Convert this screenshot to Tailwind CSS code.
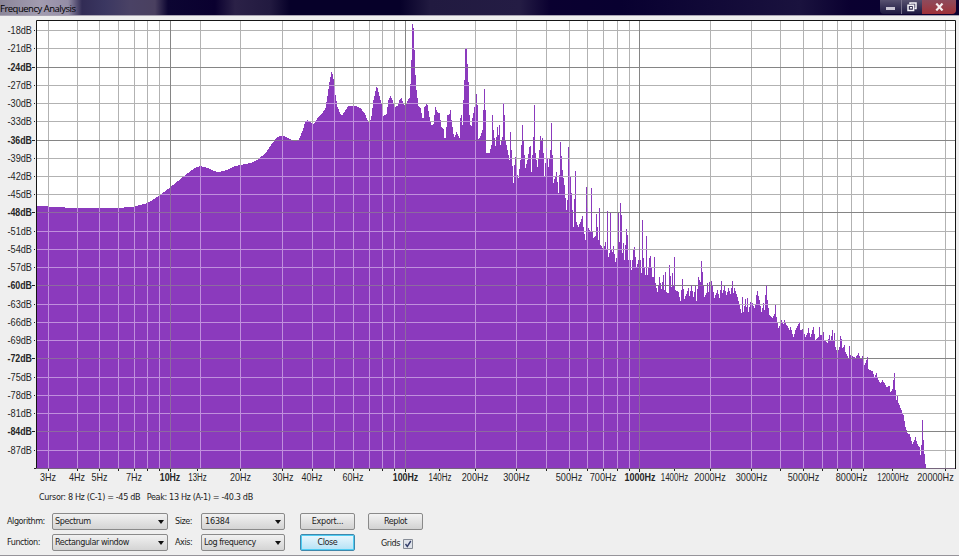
<!DOCTYPE html>
<html lang="en">
<head>
    <meta charset="UTF-8">
    <meta name="viewport" content="width=device-width, initial-scale=1.0">
    <title>Frequency Analysis</title>
    <script src="https://cdn.jsdelivr.net/npm/@tailwindcss/browser@4"></script>
</head>
<body class="w-[959px] h-[556px] overflow-hidden flex flex-col bg-[#efefef] font-['DejaVu_Sans_Condensed','Liberation_Sans',sans-serif] text-[9px] tracking-[-0.45px] text-[#222]">
    <!-- Title bar -->
    <header class="h-[15px] shrink-0 flex items-start justify-between overflow-hidden bg-[linear-gradient(90deg,#8b8699_0px,#a29cb0_40px,#948da6_68px,#322c55_82px,#3b3761_105px,#4a4265_130px,#4a4060_155px,#0c0532_168px,#0a002f_215px,#2b2147_235px,#221a40_270px,#060029_290px,#060029_400px,#211a40_430px,#241c44_520px,#0a0030_550px,#080030_620px,#1a123e_800px,#0a0030_850px,#090030_880px)]">
        <h1 class="font-['Open_Sans','Liberation_Sans',sans-serif] text-[9.5px] leading-[17px] tracking-[-0.5px] text-black whitespace-nowrap">Frequency Analysis</h1>
        <div class="flex h-[14px] mr-[3px]">
            <button class="w-[22px] h-full flex items-end justify-center bg-linear-to-b from-[#57516f] to-[#1e1840] border-r border-[#77718c] rounded-bl-sm">
                <span class="block w-[9px] h-[3px] mb-[4px] bg-[#c9c6d4]"></span>
            </button>
            <button class="w-[20px] h-full flex items-center justify-center bg-linear-to-b from-[#57516f] to-[#1e1840]">
                <svg width="10" height="10" viewBox="0 0 10 10" fill="none" stroke="#f4f4f8" stroke-width="1.5"><path d="M3 2V1h6v5.5H7.5"/><path d="M1 3.2h5.6v5.2H1z"/><path d="M3 5.8h2"/></svg>
            </button>
            <button class="w-[34px] h-full flex items-center justify-center bg-linear-to-b from-[#8d4a5c] to-[#a03038] rounded-br-sm">
                <svg width="9" height="8" viewBox="0 0 9 8" stroke="#f6eef0" stroke-width="2.2"><path d="M1.3 .6l6.2 6.8M7.5 .6L1.3 7.4"/></svg>
            </button>
        </div>
    </header>
    <div class="h-px shrink-0 bg-[#aaa5b3]"></div>

    <!-- Plot with both axes -->
    <svg id="plot" class="shrink-0 tracking-normal font-['Liberation_Sans',Arial,sans-serif]" width="959" height="472" viewBox="0 16 959 472"></svg>

    <p class="h-[19px] shrink-0 flex items-center pl-[39px]"><span class="whitespace-pre tracking-[-0.36px]">Cursor: 8 Hz (C-1) = -45 dB   Peak: 13 Hz (A-1) = -40.3 dB</span></p>

    <!-- Controls -->
    <main class="h-[48px] shrink-0 flex pt-[6px] pl-[7px] whitespace-nowrap">
        <div class="grid grid-cols-[45px_116px_33px_84px] grid-rows-[17px_17px] gap-y-[4px] items-center">
            <label>Algorithm:</label>
            <button class="h-[17px] flex items-center justify-between pl-[2px] pr-[3px] rounded-[2px] border border-[#8a8a8a] bg-linear-to-b from-[#f1f1f1] to-[#d4d4d4]">Spectrum<svg width="6" height="4"><path d="M0 0h6L3 4z" fill="#111"/></svg></button>
            <label class="pl-[7px]">Size:</label>
            <button class="h-[17px] flex items-center justify-between pl-[3px] pr-[3px] rounded-[2px] border border-[#8a8a8a] bg-linear-to-b from-[#f1f1f1] to-[#d4d4d4]"><span class="tracking-[-0.2px]">16384</span><svg width="6" height="4"><path d="M0 0h6L3 4z" fill="#111"/></svg></button>
            <label>Function:</label>
            <button class="h-[17px] flex items-center justify-between pl-[2px] pr-[3px] rounded-[2px] border border-[#8a8a8a] bg-linear-to-b from-[#f1f1f1] to-[#d4d4d4]">Rectangular window<svg width="6" height="4"><path d="M0 0h6L3 4z" fill="#111"/></svg></button>
            <label class="pl-[7px]">Axis:</label>
            <button class="h-[17px] flex items-center justify-between pl-[2px] pr-[3px] rounded-[2px] border border-[#8a8a8a] bg-linear-to-b from-[#f1f1f1] to-[#d4d4d4]">Log frequency<svg width="6" height="4"><path d="M0 0h6L3 4z" fill="#111"/></svg></button>
        </div>
        <div class="grid grid-cols-[55px_55px] grid-rows-[17px_17px] gap-x-[13px] gap-y-[4px] ml-[15px]">
            <button class="h-[17px] rounded-[2px] border border-[#8a8a8a] bg-linear-to-b from-[#f3f3f3] to-[#d2d2d2] tracking-[-0.3px]">Export...</button>
            <button class="h-[17px] rounded-[2px] border border-[#8a8a8a] bg-linear-to-b from-[#f3f3f3] to-[#d2d2d2]">Replot</button>
            <button class="h-[17px] rounded-[2px] border border-[#3f87ab] shadow-[inset_0_0_0_1px_#4fcdf3] bg-linear-to-b from-[#eaf7fd] to-[#b4e2f6]">Close</button>
            <label class="flex items-center pl-[13px] pt-[3px] gap-[3px]">Grids
                <svg width="10" height="10" viewBox="0 0 10 10"><path d="M.5.5h9v9h-9z" fill="#dfe3ea" stroke="#858b95"/><path d="M2.5 5l1.8 2.5L7.8 2" fill="none" stroke="#35406b" stroke-width="1.4"/></svg>
            </label>
        </div>
    </main>
    <div class="h-px shrink-0 bg-[#96949a]"></div>

    <script>
        const LEFT = 36, RIGHT = 955, TOP = 20, BOTTOM = 468;

        // Spectrum outline, x,y pairs
        const outline = `37,206 48,206.5 65,207.5 85,208 118,208 134,206.5 147,203 159,195.5 170,187 180,179 190,171 196,167 200,166 207,168 214,171 218,172
            226,170 235,166 240,165 250,163 258,159 265,153 272,143 276,138 279,136 284,136 289,139 294,141 298,140 302,131 305,121 307,120 313,124 317,118
            322,113 325,108 327,96 329,82 331,72 332,74 333,79 335,95 337,107 340,114 342,115 345,110 348,106 355,106 360,108 364,113 367,120 369,123 371,116
            373,100 376,87 377,88 378,92 381,104 383,116 386,114 388,100 390,96 392,100 394,107 397,106 399,100 401,98 403,104 405,106 408,99 409,98 410,84
            411,60 412,24 413,28 414,50 415,75 416,90 417,98 418,106 420,108 422,118 423,118 424,107 426,104 427,105 428,111 430,122 431,125 433,124 434,115
            435,107 437,112 439,113 441,127 443,129 444,138 445,138 447,115 449,114 450,110 451,120 453,134 454,137 456,132 459,138 460,118 461,115 462,125
            463,100 464,80 465,49 466,48 467,64 468,82 469,115 470,125 471,126 472,118 474,107 475,106 476,94 477,105 478,139 480,136 482,130 483,110 484,89
            485,110 486,153 489,153 491,145 492,115 493,130 495,146 497,127 498,135 499,125 500,145 502,137 503,103 504,115 505,140 507,150 509,160 510,132
            511,150 512,166 513,183 514,165 515,157 517,175 518,178 520,160 521,145 522,125 523,141 525,168 527,160 529,147 530,146 531,172 533,137 534,105
            535,153 537,167 539,150 540,136 541,141 542,138 543,153 544,177 546,148 548,167 550,150 551,123 552,155 553,183 556,172 557,182 558,193 559,175
            560,142 562,170 564,185 566,210 567,200 568,147 570,177 571,193 573,227 575,171 576,222 578,227 582,216 583,227 585,240 586,187 588,228 590,232
            591,188 592,232 593,238 595,236 596,214 598,240 599,208 600,245 603,249 605,242 606,249 607,211 608,257 609,253 610,213 611,250 612,252 613,246
            615,262 617,253 618,213 619,242 620,203 621,215 622,253 623,243 624,260 626,229 627,235 628,260 629,250 631,270 633,250 634,247 636,267 638,260
            639,247 641,273 642,220 643,258 645,275 646,236 647,275 649,258 650,256 652,277 653,277 654,257 655,283 657,292 659,277 661,289 663,275 664,290
            665,272 666,292 668,293 669,265 671,287 672,273 673,285 674,257 675,290 678,292 680,301 682,279 684,299 688,288 689,296 691,285 693,297 695,286
            696,301 698,277 700,282 701,261 702,272 704,297 706,293 707,283 708,292 709,282 710,290 711,281 712,285 714,298 717,290 719,298 721,281 722,293
            724,286 726,295 728,288 730,294 732,281 733,293 734,288 737,297 739,305 741,313 742,297 743,312 745,299 746,307 747,298 748,312 750,302 752,303
            754,308 755,305 756,295 757,291 759,300 761,312 763,303 764,310 765,295 766,285 767,300 769,315 772,318 774,314 775,305 776,317 778,328 780,324
            781,320 783,324 784,320 786,325 787,326 789,330 790,327 793,337 795,330 797,326 799,322 800,330 802,329 805,337 807,333 808,328 810,337 812,330
            813,327 815,340 818,337 819,327 820,335 822,335 823,332 824,340 827,343 829,335 830,341 832,330 833,341 834,333 835,347 837,353 839,347 840,336
            841,339 842,348 844,345 845,352 848,358 849,346 850,355 855,358 858,353 860,359 862,356 864,365 866,360 867,357 868,369 872,371 874,377 876,373
            878,380 880,383 882,380 884,383 886,387 889,386 890,392 892,389 893,380 894,373 895,390 896,400 897,396 898,403 901,410 903,415 905,427 907,433
            909,434 912,444 914,440 915,437 917,444 919,447 920,455 921,445 922,420 923,440 924,454 925,464 926,468`
            .trim().split(/\s+/).map(p => p.split(',').map(Number));

        // Grid lines, true = major
        const gridX = [[48], [77], [99], [118], [134], [147], [159], [170, true], [200], [240], [282], [312], [334], [353], [369], [382], [394], [405, true],
            [475], [516], [546], [569], [587], [603], [617], [629], [639, true], [710], [751], [780], [803], [822], [837], [851], [863], [945]];

        // Text, centre, width, style
        const labels = [['3Hz', 48, 16], ['4Hz', 77, 16], ['5Hz', 99.5, 16], ['7Hz', 134, 16], ['10Hz', 170, 20.5, 'b'], ['13Hz', 197.5, 18.5, 's'], ['20Hz', 240.5, 21],
            ['30Hz', 283, 21], ['40Hz', 312, 21], ['60Hz', 353, 21], ['100Hz', 405.5, 25.5, 'b'], ['140Hz', 440, 23, 's'], ['200Hz', 475, 26.5], ['300Hz', 516.5, 26.5],
            ['500Hz', 569, 26.5], ['700Hz', 603, 26.5], ['1000Hz', 640, 31, 'b'], ['1400Hz', 674.5, 27.5, 's'], ['2000Hz', 710, 31.5], ['3000Hz', 751.5, 31.5],
            ['5000Hz', 803.5, 31.5], ['8000Hz', 851.5, 31.5], ['12000Hz', 893, 31.5, 's'], ['20000Hz', 935.5, 36.5]];

        // One column per pixel
        let d = `M37 ${BOTTOM}`;
        let i = 0;
        for (let x = 37; x < 926; x++) {
            while (outline[i + 1][0] <= x) i++;
            const [x0, y0] = outline[i];
            const [x1, y1] = outline[i + 1];
            const y = Math.round(y0 + (y1 - y0) * (x - x0) / (x1 - x0));
            d += `V${y}H${x + 1}`;
        }
        d += `V${BOTTOM}Z`;

        let minor = '', major = '', ticks = '', text = '';
        gridX.forEach(([x, isMajor]) => {
            const line = `M${x + 0.5} 21V468`;
            if (isMajor) major += line; else minor += line;
            // the 13Hz tick stands beside its line
            if (x !== 200) ticks += `M${x + 0.5} 469v${isMajor ? 3 : 2}`;
        });
        [197, 439, 674, 892].forEach(x => ticks += `M${x + 0.5} 469v2`);

        for (let db = 18, n = 0; db <= 87; db += 3, n++) {
            const y = Math.floor(30.6 + n * 18.24);
            const isMajor = db % 12 === 0;
            const line = `M37 ${y + 0.5}H955`;
            if (isMajor) major += line; else minor += line;
            ticks += `M${isMajor ? 32 : 34} ${y + 0.5}H35`;
            text += `<text x="7.5" y="${y + 4}" font-size="10.5" textLength="24.5" lengthAdjust="spacingAndGlyphs" ${isMajor ? 'font-weight="700"' : ''}>-${db}dB</text>`;
        }
        labels.forEach(([t, cx, w, kind]) => {
            text += `<text x="${cx - w / 2}" y="481" font-size="${kind === 's' ? 10 : 10.8}" textLength="${w}" lengthAdjust="spacingAndGlyphs" ${kind === 'b' ? 'font-weight="700"' : ''}>${t}</text>`;
        });

        document.getElementById('plot').innerHTML = `
            <clipPath id="area"><path d="${d}"/></clipPath>
            <rect x="${LEFT}" y="${TOP}" width="${RIGHT - LEFT}" height="${BOTTOM - TOP}" fill="#fff"/>
            <path d="${minor}" stroke="#b2b2b2"/>
            <path d="${d}" fill="#8b3abd" shape-rendering="crispEdges"/>
            <path d="${minor}" stroke="#c08fdd" clip-path="url(#area)"/>
            <path d="${major}" stroke="#858585"/>
            <path d="${major}" stroke="#8d6a9f" clip-path="url(#area)"/>
            <path d="M36.5 468V20.5H955.5V469" fill="none" stroke="#151515"/>
            <path d="M36 468.5H955" stroke="#75657c"/>
            <path d="${ticks}M34 468.5h2" stroke="#222"/>
            <g fill="#262626">${text}</g>`;
    </script>
</body>
</html>
